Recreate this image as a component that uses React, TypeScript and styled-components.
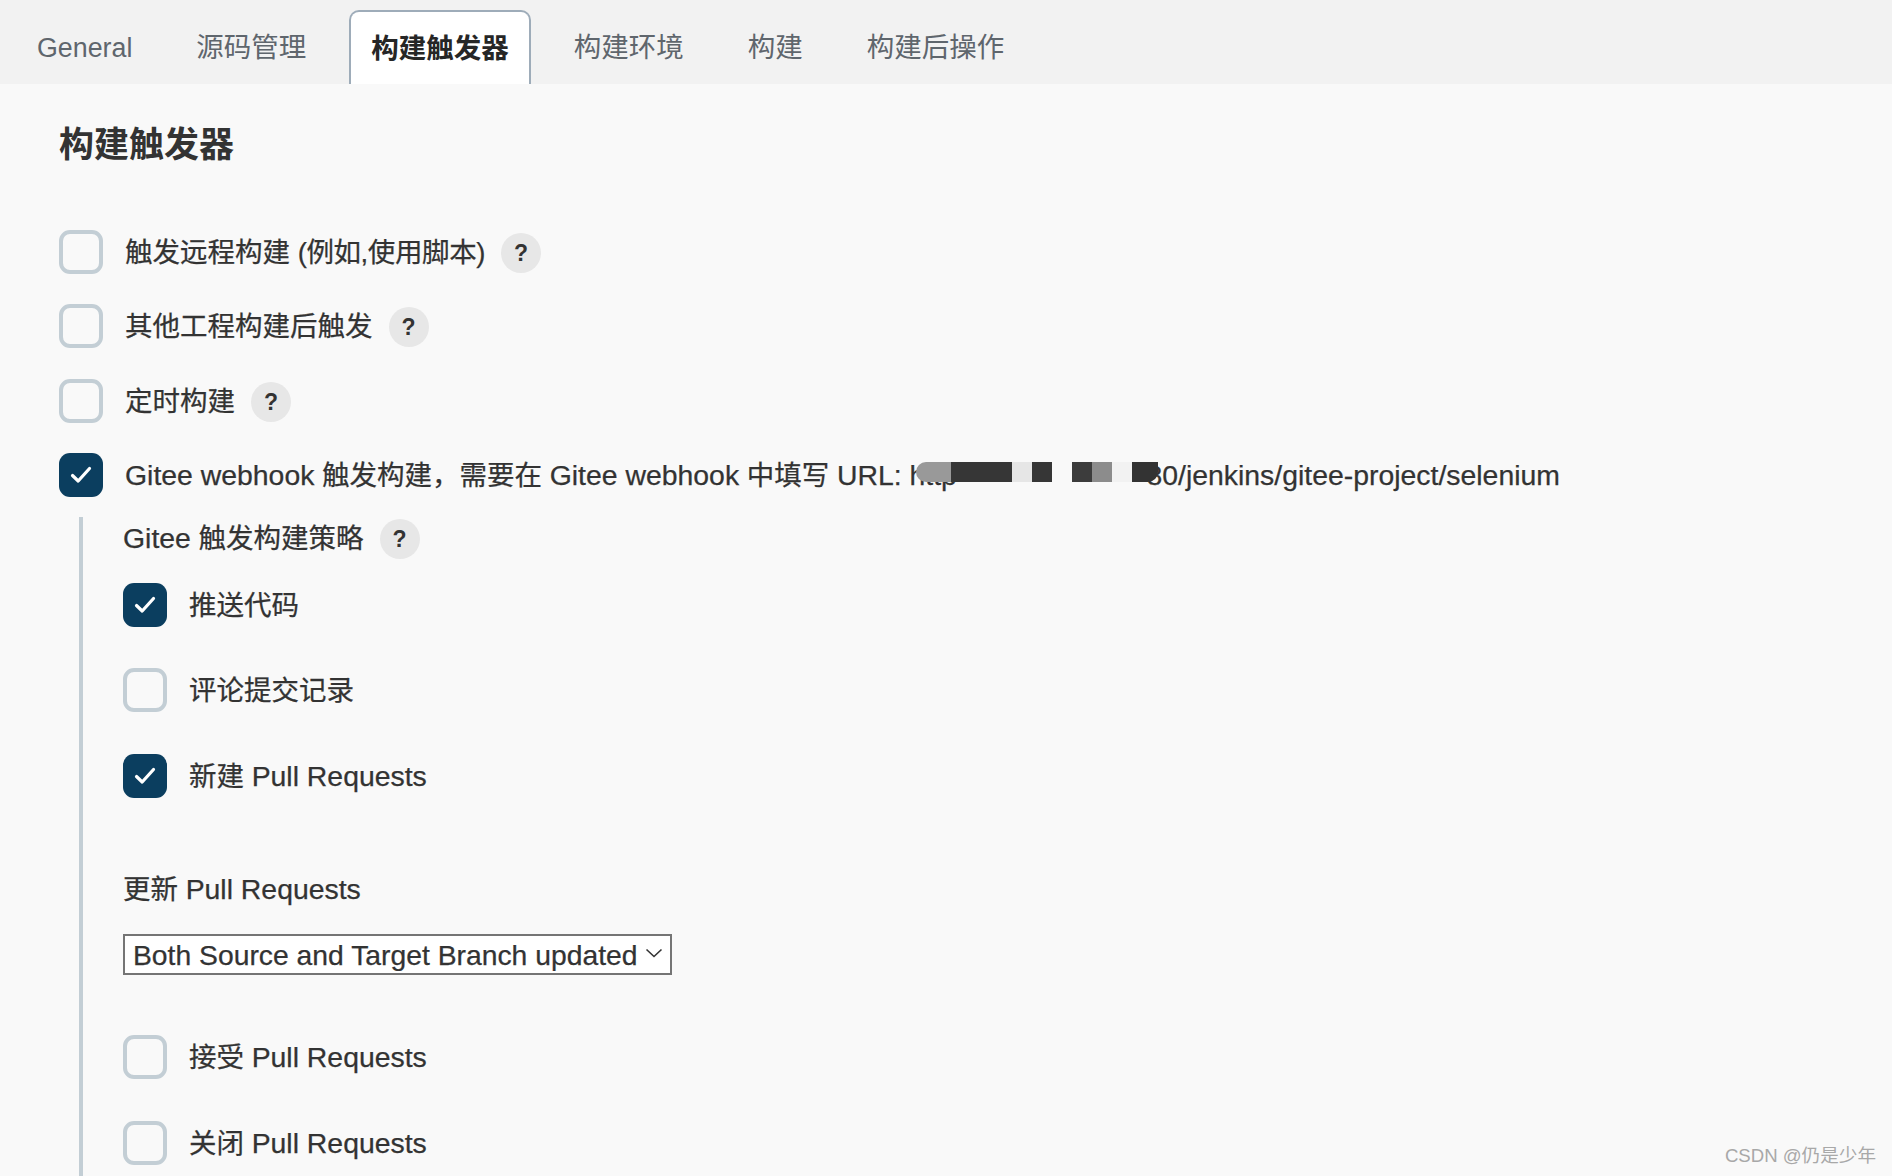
import styled, { createGlobalStyle } from 'styled-components';

const GlobalStyle = createGlobalStyle`
  html, body {
    margin: 0;
    padding: 0;
    height: 100%;
    overflow: hidden;
    background-color: #f9f9f9;
  }
`;

const Page = styled.div`
  position: relative;
  height: 100vh;
  overflow: hidden;
  background-color: #f9f9f9;
  color: #333;
  font-family: "Liberation Sans", "Noto Sans CJK SC", sans-serif;
  font-size: 27.5px;
  line-height: 40px;
  -webkit-text-stroke: 0.25px;
`;

const En = styled.span`
  font-size: 28.4px;
`;

const TabBar = styled.div`
  display: flex;
  align-items: flex-end;
  height: 84px;
  padding-left: 5px;
  background-color: #f2f2f2;
  box-sizing: border-box;
`;

const Tab = styled.div<{ $active?: boolean }>`
  display: flex;
  align-items: center;
  justify-content: center;
  height: 74px;
  box-sizing: border-box;
  padding: 2px ${(p) => (p.$active ? '20px' : '32px')} 0;
  margin: ${(p) => (p.$active ? '0 11px' : '0')};
  color: ${(p) => (p.$active ? '#262626' : '#5f666d')};
  font-weight: ${(p) => (p.$active ? 700 : 400)};
  -webkit-text-stroke: 0;
  background-color: ${(p) => (p.$active ? '#fff' : 'transparent')};
  border: ${(p) => (p.$active ? '2px solid #9eacb9' : 'none')};
  border-bottom: none;
  border-radius: ${(p) => (p.$active ? '10px 10px 0 0' : '0')};
`;

const TabLatin = styled.span`
  font-size: 26.8px;
`;

const Content = styled.div`
  padding: 39px 0 0 59px;
`;

const Heading = styled.h2`
  margin: 0 0 63px;
  height: 44px;
  line-height: 44px;
  font-size: 35px;
  font-weight: 700;
  color: #333;
  -webkit-text-stroke: 0;
`;

const TriggerList = styled.div`
  display: flex;
  flex-direction: column;
  gap: 30.3px;
`;

const Row = styled.div<{ $top?: number }>`
  display: flex;
  align-items: center;
  gap: 22px;
  height: 44px;
  margin-top: ${(p) => p.$top ?? 0}px;
  white-space: nowrap;
`;

const Box = styled.span<{ $checked?: boolean }>`
  display: flex;
  align-items: center;
  justify-content: center;
  flex: none;
  width: 44px;
  height: 44px;
  box-sizing: border-box;
  border-radius: 11px;
  border: ${(p) => (p.$checked ? 'none' : '4px solid #c3ced5')};
  background-color: ${(p) => (p.$checked ? '#0b3e5f' : 'transparent')};
`;

const Label = styled.span`
  display: inline-flex;
  align-items: center;
  gap: 16px;
  padding-top: 2px;
`;

const Narrow = styled.span`
  letter-spacing: -0.4px;
`;

const Help = styled.span`
  display: flex;
  align-items: center;
  justify-content: center;
  flex: none;
  width: 40px;
  height: 40px;
  border-radius: 50%;
  background-color: #e7e7e7;
  font-size: 23px;
  font-weight: 700;
  color: #333;
  -webkit-text-stroke: 0;
`;

const Masked = styled.span`
  position: relative;
  display: inline-block;
  width: 237px;
`;

const Patch = styled.span<{ $left: number; $width: number; $color: string; $round?: string }>`
  position: absolute;
  z-index: 1;
  top: 7px;
  left: ${(p) => p.$left}px;
  width: ${(p) => p.$width}px;
  height: 20px;
  background-color: ${(p) => p.$color};
  border-radius: ${(p) => p.$round ?? '0'};
`;

const Nested = styled.div`
  margin: 20px 0 0 20px;
  padding-left: 40px;
  border-left: 4px solid #c3ced5;
  height: 700px;
`;

const PlainLabel = styled.div<{ $top?: number }>`
  display: flex;
  align-items: center;
  gap: 16px;
  box-sizing: border-box;
  height: 42px;
  padding-top: 2px;
  margin-top: ${(p) => p.$top ?? 0}px;
`;

const SelectWrap = styled.div`
  position: relative;
  width: 549px;
  height: 41px;
  margin-top: 24px;
`;

const Select = styled.select`
  width: 100%;
  height: 100%;
  box-sizing: border-box;
  padding: 2px 0 0 8px;
  appearance: none;
  border: 2px solid #757575;
  border-radius: 0;
  background-color: #fff;
  color: #333;
  font-family: "Liberation Sans", "Noto Sans CJK SC", sans-serif;
  font-size: 28.3px;
  -webkit-text-stroke: 0.25px;
`;

const Chevron = styled.svg`
  position: absolute;
  top: 14px;
  right: 9px;
  width: 18px;
  height: 10px;
  pointer-events: none;
`;

const Watermark = styled.div`
  position: absolute;
  right: 16px;
  bottom: 0;
  font-size: 18.6px;
  color: #a8a8a8;
  -webkit-text-stroke: 0;
`;

const Check = () => (
  <svg width="22" height="18" viewBox="0 0 22 18" fill="none">
    <path d="M2.5 9.5 L8.2 15 L19.5 2.5" stroke="#fff" strokeWidth="3.2" strokeLinecap="round" strokeLinejoin="round" />
  </svg>
);

const CheckBox = ({ checked }: { checked?: boolean }) => (
  <Box $checked={checked}>{checked && <Check />}</Box>
);

const tabs = ['源码管理', '构建触发器', '构建环境', '构建', '构建后操作'];

const App = () => (
  <Page>
    <GlobalStyle />
    <TabBar>
      <Tab>
        <TabLatin>General</TabLatin>
      </Tab>
      {tabs.map((t, i) => (
        <Tab key={t} $active={i === 1}>
          {t}
        </Tab>
      ))}
    </TabBar>

    <Content>
      <Heading>构建触发器</Heading>

      <TriggerList>
        <Row>
          <CheckBox />
          <Label>
            <span>
              触发远程构建 <Narrow>(例如,使用脚本)</Narrow>
            </span>
            <Help>?</Help>
          </Label>
        </Row>
        <Row>
          <CheckBox />
          <Label>
            其他工程构建后触发
            <Help>?</Help>
          </Label>
        </Row>
        <Row>
          <CheckBox />
          <Label>
            定时构建
            <Help>?</Help>
          </Label>
        </Row>
        <Row>
          <CheckBox checked />
          <Label>
            <span>
              <En>Gitee webhook</En> 触发构建，需要在 <En>Gitee webhook</En> 中填写 <En>URL: </En>
              <Masked>
                <En>http</En>
                <Patch $left={7} $width={35} $color="#999" $round="10px 0 0 10px" />
                <Patch $left={42} $width={61} $color="#363636" />
                <Patch $left={103} $width={20} $color="#e6e6e6" />
                <Patch $left={123} $width={20} $color="#363636" />
                <Patch $left={163} $width={20} $color="#3c3c3c" />
                <Patch $left={183} $width={20} $color="#8c8c8c" />
                <Patch $left={203} $width={20} $color="#f2f2f2" />
                <Patch $left={223} $width={26} $color="#333" $round="0 0 10px 0" />
              </Masked>
              <En>80/jenkins/gitee-project/selenium</En>
            </span>
          </Label>
        </Row>
      </TriggerList>

      <Nested>
        <PlainLabel>
          <span>
            <En>Gitee</En> 触发构建策略
          </span>
          <Help>?</Help>
        </PlainLabel>
        <Row $top={24}>
          <CheckBox checked />
          <Label>推送代码</Label>
        </Row>
        <Row $top={41}>
          <CheckBox />
          <Label>评论提交记录</Label>
        </Row>
        <Row $top={42}>
          <CheckBox checked />
          <Label>
            <span>
              新建 <En>Pull Requests</En>
            </span>
          </Label>
        </Row>

        <PlainLabel $top={70}>
          <span>
            更新 <En>Pull Requests</En>
          </span>
        </PlainLabel>
        <SelectWrap>
          <Select defaultValue="both">
            <option value="both">Both Source and Target Branch updated</option>
          </Select>
          <Chevron viewBox="0 0 18 10" fill="none">
            <path d="M1.5 1.5 L9 8.5 L16.5 1.5" stroke="#333" strokeWidth="1.6" />
          </Chevron>
        </SelectWrap>

        <Row $top={60}>
          <CheckBox />
          <Label>
            <span>
              接受 <En>Pull Requests</En>
            </span>
          </Label>
        </Row>
        <Row $top={42}>
          <CheckBox />
          <Label>
            <span>
              关闭 <En>Pull Requests</En>
            </span>
          </Label>
        </Row>
      </Nested>
    </Content>

    <Watermark>CSDN @仍是少年</Watermark>
  </Page>
);

export default App;
